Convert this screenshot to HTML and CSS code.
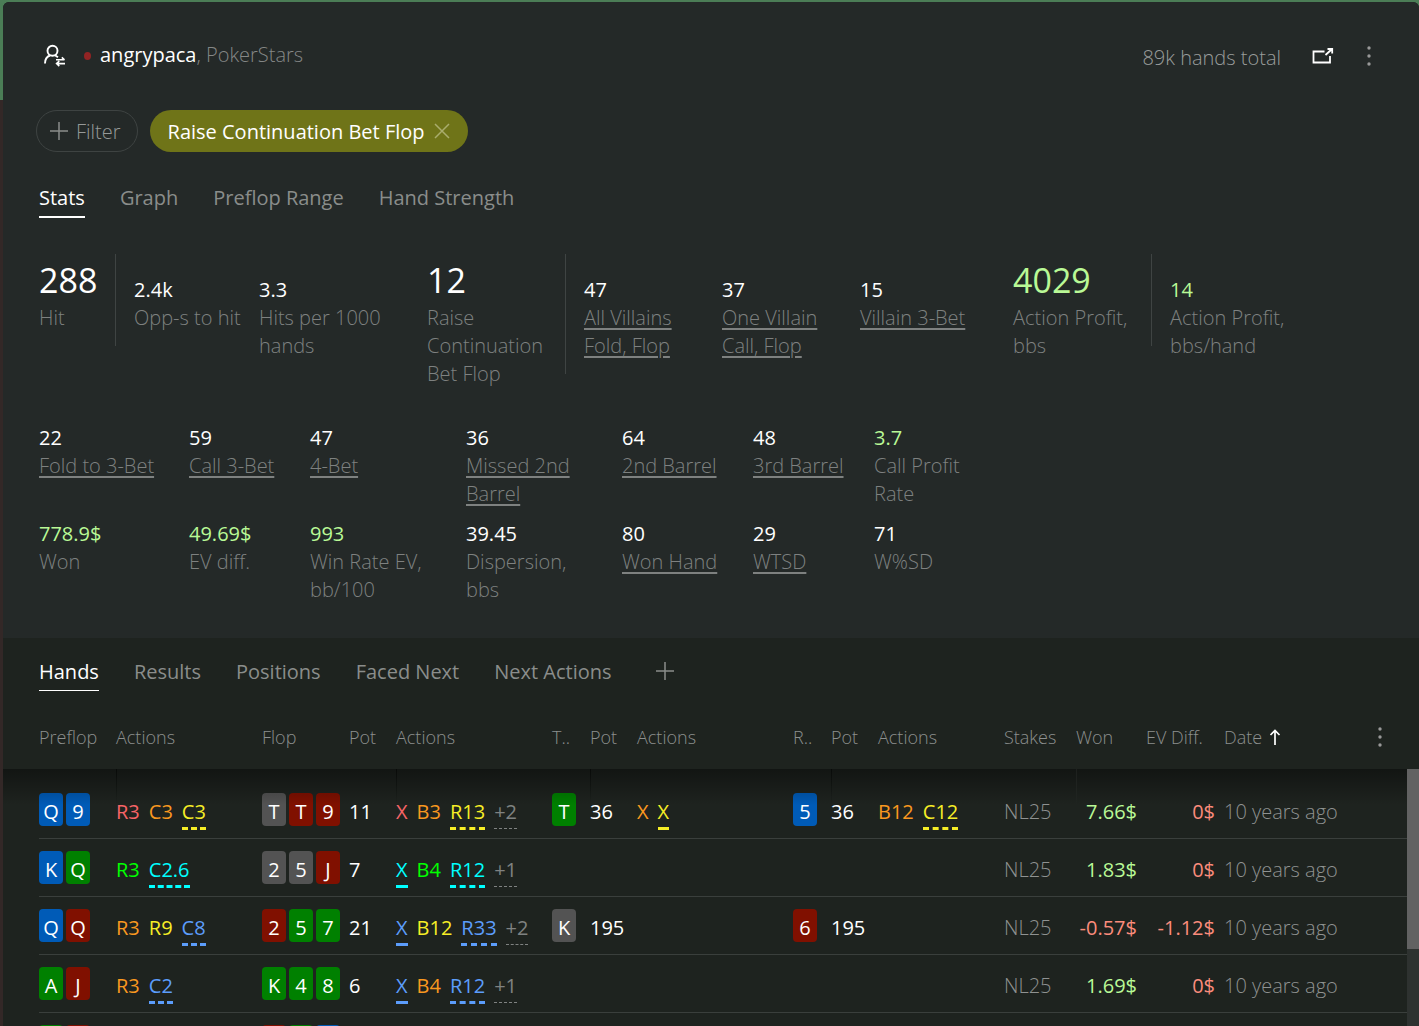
FILE: index.html
```html
<!DOCTYPE html>
<html lang="en">
<head>
  <title>angrypaca, PokerStars</title>
  <meta charset="utf-8">
  <meta name="viewport" content="width=device-width, initial-scale=1">
  <link rel="stylesheet" href="styles.css">
</head>
<body>
  <div class="window">
    <section class="player">
      <header class="player-header">
        <button class="icon-button" aria-label="Switch player">
          <svg width="24" height="24" viewBox="0 0 24 24" fill="none" stroke="#fff" stroke-width="1.900">
            <circle cx="9.500" cy="6.800" r="5"/>
            <path d="M2 19.500c0-4.500 2-7 5-8M12 11.300l3 2"/>
            <path d="M13 15.800h8.500M18.800 13.300l2.700 2.500M22 19.600h-8.500M16.300 17.100l-2.700 2.500 2.700 2.500" stroke-width="1.600"/>
          </svg>
        </button>
        <span class="dot"></span>
        <h1 class="player-name"><b>angrypaca</b>, PokerStars</h1>
        <span class="total">89k hands total</span>
        <button class="icon-button popout" aria-label="Open in new window">
          <svg width="22" height="18" viewBox="0 0 22 18" fill="none" stroke="#fff">
            <path d="M12.500 4.500H1.500v11h16.500V9" stroke-width="1.800"/>
            <path d="M13.500 8l6-5.500M15.500 2H20.200v4.500" stroke-width="1.800"/>
          </svg>
        </button>
        <button class="icon-button" aria-label="Menu">
          <svg width="6" height="20" viewBox="0 0 6 20" fill="#999">
            <circle cx="3" cy="2" r="1.700"/><circle cx="3" cy="10" r="1.700"/><circle cx="3" cy="18" r="1.700"/>
          </svg>
        </button>
      </header>

      <div class="filters">
        <button class="filter-add">
          <svg width="20" height="20" viewBox="0 0 20 20" stroke="#8a8d8b" stroke-width="1.500"><path d="M10 1v18M1 10h18"/></svg>
          <span>Filter</span>
        </button>
        <button class="filter-chip">
          <span>Raise Continuation Bet Flop</span>
          <svg width="16" height="16" viewBox="0 0 16 16" stroke="#a9ac6c" stroke-width="1.500"><path d="M1 1l14 14M15 1L1 15"/></svg>
        </button>
      </div>

      <nav class="tabs">
        <button class="tab active">Stats</button>
        <button class="tab">Graph</button>
        <button class="tab">Preflop Range</button>
        <button class="tab">Hand Strength</button>
      </nav>

      <div class="summary">
        <div class="group">
          <div class="stat big hit"><b>288</b><span>Hit</span></div>
          <div class="stat divided opps"><b>2.4k</b><span>Opp-s to hit</span></div>
          <div class="stat"><b>3.3</b><span>Hits per 1000<br>hands</span></div>
        </div>
        <div class="group">
          <div class="stat big"><b>12</b><span>Raise<br>Continuation<br>Bet Flop</span></div>
          <div class="stat divided"><b>47</b><a href="#">All Villains<br>Fold, Flop</a></div>
          <div class="stat"><b>37</b><a href="#">One Villain<br>Call, Flop</a></div>
          <div class="stat"><b>15</b><a href="#">Villain 3-Bet</a></div>
        </div>
        <div class="group">
          <div class="stat big plus"><b>4029</b><span>Action Profit,<br>bbs</span></div>
          <div class="stat divided plus"><b>14</b><span>Action Profit,<br>bbs/hand</span></div>
        </div>
      </div>

      <div class="details">
        <div class="stat"><b>22</b><a href="#">Fold to 3-Bet</a></div>
        <div class="stat"><b>59</b><a href="#">Call 3-Bet</a></div>
        <div class="stat"><b>47</b><a href="#">4-Bet</a></div>
        <div class="stat"><b>36</b><a href="#">Missed 2nd<br>Barrel</a></div>
        <div class="stat"><b>64</b><a href="#">2nd Barrel</a></div>
        <div class="stat"><b>48</b><a href="#">3rd Barrel</a></div>
        <div class="stat plus"><b>3.7</b><span>Call Profit<br>Rate</span></div>
        <div class="stat plus"><b>778.9$</b><span>Won</span></div>
        <div class="stat plus"><b>49.69$</b><span>EV diff.</span></div>
        <div class="stat plus"><b>993</b><span>Win Rate EV,<br>bb/100</span></div>
        <div class="stat"><b>39.45</b><span>Dispersion,<br>bbs</span></div>
        <div class="stat"><b>80</b><a href="#">Won Hand</a></div>
        <div class="stat"><b>29</b><a href="#">WTSD</a></div>
        <div class="stat"><b>71</b><span>W%SD</span></div>
      </div>
    </section>

    <section class="hands">
      <nav class="tabs hands-tabs">
        <button class="tab active">Hands</button>
        <button class="tab">Results</button>
        <button class="tab">Positions</button>
        <button class="tab">Faced Next</button>
        <button class="tab">Next Actions</button>
        <button class="icon-button tab-add" aria-label="Add tab">
          <svg width="20" height="20" viewBox="0 0 20 20" stroke="#8a8d8b" stroke-width="1.500"><path d="M10 1v18M1 10h18"/></svg>
        </button>
      </nav>

      <div class="hands-list">
        <table>
          <colgroup>
            <col class="c-preflop"><col class="c-pre-actions">
            <col class="c-flop"><col class="c-pot"><col class="c-actions">
            <col class="c-card"><col class="c-pot"><col class="c-actions">
            <col class="c-card"><col class="c-pot"><col class="c-river-actions">
            <col class="c-stakes"><col class="c-won"><col class="c-ev"><col>
          </colgroup>
          <thead>
            <tr>
              <th>Preflop</th><th>Actions</th>
              <th>Flop</th><th>Pot</th><th>Actions</th>
              <th>T..</th><th>Pot</th><th>Actions</th>
              <th>R..</th><th>Pot</th><th>Actions</th>
              <th>Stakes</th><th>Won</th><th>EV Diff.</th>
              <th>
                <div class="date-head">Date
                  <svg width="12" height="16" viewBox="0 0 12 16" fill="none" stroke="#fff" stroke-width="1.700"><path d="M6 16V1.500M1.500 6L6 1.500 10.500 6"/></svg>
                  <button class="icon-button columns-menu" aria-label="Columns">
                    <svg width="6" height="20" viewBox="0 0 6 20" fill="#999">
                      <circle cx="3" cy="2" r="1.700"/><circle cx="3" cy="10" r="1.700"/><circle cx="3" cy="18" r="1.700"/>
                    </svg>
                  </button>
                </div>
              </th>
            </tr>
          </thead>
          <tbody>
            <tr>
              <td><div class="cards"><i class="card d">Q</i><i class="card d">9</i></div></td>
              <td class="line"><div class="acts"><span class="red">R3</span><span class="orange">C3</span><span class="yellow hero">C3</span></div></td>
              <td><div class="cards"><i class="card s">T</i><i class="card h">T</i><i class="card h">9</i></div></td>
              <td>11</td>
              <td class="line"><div class="acts"><span class="red">X</span><span class="orange">B3</span><span class="yellow hero">R13</span><span class="more">+2</span></div></td>
              <td><div class="cards"><i class="card c">T</i></div></td>
              <td class="line">36</td>
              <td><div class="acts"><span class="orange">X</span><span class="yellow hero check">X</span></div></td>
              <td><div class="cards"><i class="card d">5</i></div></td>
              <td class="line">36</td>
              <td><div class="acts"><span class="orange">B12</span><span class="yellow hero">C12</span></div></td>
              <td class="muted">NL25</td>
              <td class="money plus line light">7.66$</td>
              <td class="money minus">0$</td>
              <td class="muted">10 years ago</td>
            </tr>
            <tr>
              <td><div class="cards"><i class="card d">K</i><i class="card c">Q</i></div></td>
              <td><div class="acts"><span class="green">R3</span><span class="cyan hero">C2.6</span></div></td>
              <td><div class="cards"><i class="card s">2</i><i class="card s">5</i><i class="card h">J</i></div></td>
              <td>7</td>
              <td><div class="acts"><span class="cyan hero check">X</span><span class="green">B4</span><span class="cyan hero">R12</span><span class="more">+1</span></div></td>
              <td></td><td></td><td></td><td></td><td></td><td></td>
              <td class="muted">NL25</td>
              <td class="money plus">1.83$</td>
              <td class="money minus">0$</td>
              <td class="muted">10 years ago</td>
            </tr>
            <tr>
              <td><div class="cards"><i class="card d">Q</i><i class="card h">Q</i></div></td>
              <td><div class="acts"><span class="orange">R3</span><span class="yellow">R9</span><span class="blue hero">C8</span></div></td>
              <td><div class="cards"><i class="card h">2</i><i class="card c">5</i><i class="card c">7</i></div></td>
              <td>21</td>
              <td><div class="acts"><span class="blue hero check">X</span><span class="yellow">B12</span><span class="blue hero">R33</span><span class="more">+2</span></div></td>
              <td><div class="cards"><i class="card s">K</i></div></td>
              <td>195</td>
              <td></td>
              <td><div class="cards"><i class="card h">6</i></div></td>
              <td>195</td>
              <td></td>
              <td class="muted">NL25</td>
              <td class="money minus">-0.57$</td>
              <td class="money minus">-1.12$</td>
              <td class="muted">10 years ago</td>
            </tr>
            <tr>
              <td><div class="cards"><i class="card c">A</i><i class="card h">J</i></div></td>
              <td><div class="acts"><span class="orange">R3</span><span class="blue hero">C2</span></div></td>
              <td><div class="cards"><i class="card c">K</i><i class="card c">4</i><i class="card c">8</i></div></td>
              <td>6</td>
              <td><div class="acts"><span class="blue hero check">X</span><span class="orange">B4</span><span class="blue hero">R12</span><span class="more">+1</span></div></td>
              <td></td><td></td><td></td><td></td><td></td><td></td>
              <td class="muted">NL25</td>
              <td class="money plus">1.69$</td>
              <td class="money minus">0$</td>
              <td class="muted">10 years ago</td>
            </tr>
            <tr>
              <td><div class="cards"><i class="card c"></i><i class="card h"></i></div></td>
              <td></td>
              <td><div class="cards"><i class="card h"></i><i class="card c"></i><i class="card d"></i></div></td>
              <td></td><td></td><td></td><td></td><td></td><td></td><td></td><td></td><td></td><td></td><td></td><td></td>
            </tr>
          </tbody>
        </table>
        <div class="scroll-shadow"></div>
        <div class="scrollbar"><div class="thumb"></div></div>
      </div>
    </section>
  </div>
</body>
</html>
```

FILE: styles.css
```css
* {
  box-sizing: border-box;
}

body {
  margin: 0;
  height: 100vh;
  overflow: hidden;
  padding: 2px 0 0 3px;
  background: linear-gradient(#4b7d56 100px, #332827 100px);
  font-family: "Open Sans", "Noto Sans", sans-serif;
  font-size: 20px;
  line-height: 28px;
  color: #fff;
}

button {
  margin: 0;
  padding: 0;
  border: 0;
  background: none;
  color: inherit;
  font: inherit;
  cursor: pointer;
}

svg {
  display: block;
}

.window {
  height: 100%;
  display: flex;
  flex-direction: column;
  border-radius: 6px 6px 0 0;
  overflow: hidden;
  background: #1e231f;
}

.player {
  padding: 36px 36px 34px;
  background: #242928;
}

.player-header {
  display: flex;
  align-items: center;
  height: 36px;
  padding: 0 11px 0 4px;
}

.icon-button {
  display: flex;
  align-items: center;
  justify-content: center;
}

.dot {
  width: 7px;
  height: 8px;
  margin: 0 9px 0 17px;
  border-radius: 50%;
  background: #922424;
}

.player-name {
  margin: 0;
  flex: 1;
  padding-bottom: 2px;
  font-size: 20px;
  line-height: 28px;
  font-weight: 300;
  color: #848786;
}

.player-name b {
  font-weight: 500;
  color: #fff;
}

.total {
  padding-top: 4px;
  font-weight: 300;
  color: #999c9b;
}

.popout {
  margin: 0 32px 0 31px;
}

.filters {
  display: flex;
  gap: 12px;
  margin: 36px 0 0 -3px;
}

.filter-add,
.filter-chip {
  display: flex;
  align-items: center;
  height: 42px;
  border-radius: 21px;
}

.filter-add span,
.filter-chip span {
  padding-top: 2px;
}

.filter-add {
  gap: 7px;
  padding: 0 16px 0 12px;
  border: 1px solid #3e4342;
  font-weight: 300;
  color: #969998;
}

.filter-chip {
  gap: 9px;
  padding: 0 18px;
  background: #6f7418;
}

.tabs {
  display: flex;
  gap: 35px;
  margin-top: 32px;
}

.tab {
  height: 34px;
  padding-bottom: 4px;
  border-bottom: 2px solid transparent;
  color: #8a8d8b;
}

.tab.active {
  border-color: #fff;
  color: #fff;
}

.summary {
  display: grid;
  grid-template-columns: 388px 586px 1fr;
  margin-top: 36px;
}

.group {
  display: flex;
  align-items: flex-start;
  align-self: start;
}

.group .stat {
  flex: 0 0 138px;
  align-self: stretch;
  padding-top: 22px;
}

.group .hit {
  flex-basis: 76px;
}

.group .divided {
  flex-basis: 157px;
  padding-left: 19px;
  background: linear-gradient(#3f4443, #3f4443) no-repeat 0 0 / 1px calc(100% - 14px);
}

.group .opps {
  flex-basis: 144px;
}

.stat b,
.stat span,
.stat a {
  display: block;
  white-space: nowrap;
}

.stat b {
  font-weight: 400;
}

.stat span,
.stat a {
  font-weight: 300;
  color: #7e8180;
}

.stat a {
  text-decoration: underline;
  text-underline-offset: 3px;
}

.group .big {
  padding-top: 2px;
}

.big b {
  font-size: 34px;
  line-height: 48px;
}

.plus b,
.money.plus {
  color: #b9f996;
}

.details {
  display: grid;
  grid-template-columns: 150px 121px 156px 156px 131px 121px 1fr;
  row-gap: 12px;
  margin-top: 36px;
}

.hands {
  flex: 1;
  min-height: 0;
  display: flex;
  flex-direction: column;
  background: #1e231f;
}

.hands-tabs {
  margin-top: 20px;
  padding-left: 36px;
}

.hands-tabs .tab {
  height: 33px;
  border-bottom-width: 1px;
}

.tab-add {
  height: 25px;
  margin-left: 8px;
}

.hands-list {
  position: relative;
  flex: 1;
  min-height: 0;
  overflow: hidden;
  margin-top: 14px;
  padding: 0 12px 0 36px;
}

table {
  width: 100%;
  table-layout: fixed;
  border-collapse: separate;
  border-spacing: 0;
}

.c-preflop { width: 77px; }
.c-pre-actions { width: 146px; }
.c-flop { width: 87px; }
.c-pot { width: 47px; }
.c-actions { width: 156px; }
.c-card { width: 38px; }
.c-river-actions { width: 126px; }
.c-stakes { width: 72px; }
.c-won { width: 70px; }
.c-ev { width: 78px; }

th {
  height: 64px;
  padding: 0;
  text-align: left;
  font-size: 18px;
  font-weight: 300;
  color: #8c8f8e;
  white-space: nowrap;
}

.date-head {
  display: flex;
  align-items: center;
  gap: 7px;
}

.columns-menu {
  margin: 0 24px 0 auto;
}

td {
  height: 58px;
  padding: 12px 0 0;
  border-bottom: 1px solid #3a3f3c;
  vertical-align: top;
  line-height: 37px;
  white-space: nowrap;
}

tbody tr:first-child td {
  height: 70px;
  padding-top: 24px;
}

/* column guides fade out under the header */
.line {
  background: linear-gradient(#0e120f, #1e231f) no-repeat 0 0 / 1px 36px;
}

.line.light {
  background-image: linear-gradient(#303531, #1e231f);
}

.cards {
  display: flex;
  gap: 3px;
}

.card {
  width: 24px;
  height: 33px;
  border-radius: 4px;
  font-style: normal;
  text-align: center;
}

.d { background: #005bb7; }
.h { background: #801000; }
.c { background: #008000; }
.s { background: #535353; }

.acts {
  display: flex;
  gap: 9px;
}

.acts span {
  height: 37px;
}

.hero {
  border-bottom: 3px dashed;
}

.check {
  border-bottom-style: solid;
}

.acts .more {
  height: 36px;
  border-bottom: 1px dashed;
  color: #7f8281;
}

.red { color: #f76467; }
.orange { color: #f9981f; }
.yellow { color: #f6ee26; }
.green { color: #00ff00; }
.cyan { color: #00ffff; }
.blue { color: #5c9dfb; }

.muted {
  font-weight: 300;
  color: #8f9291;
}

.money {
  padding-right: 9px;
  text-align: right;
}

.minus {
  color: #fb8c7c;
}

.scroll-shadow {
  position: absolute;
  top: 64px;
  left: 0;
  right: 12px;
  height: 36px;
  background: linear-gradient(rgba(0, 0, 0, .4), rgba(0, 0, 0, 0));
  pointer-events: none;
}

.scrollbar {
  position: absolute;
  top: 64px;
  right: 0;
  bottom: 0;
  width: 12px;
  background: #2e3230;
}

.thumb {
  height: 70%;
  background: #626262;
}
```
